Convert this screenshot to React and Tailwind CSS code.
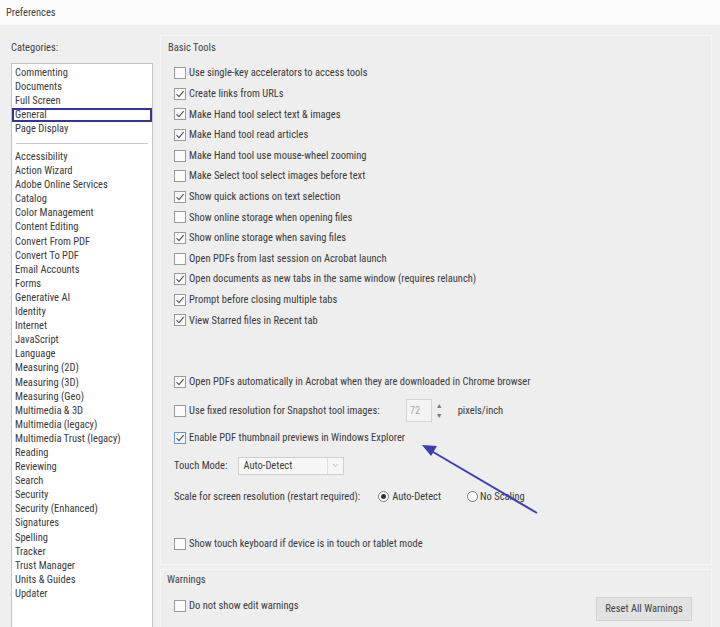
import { ChevronDown } from "lucide-react";

const topCategories = ["Commenting", "Documents", "Full Screen", "General", "Page Display"];

const categories = [
  "Accessibility",
  "Action Wizard",
  "Adobe Online Services",
  "Catalog",
  "Color Management",
  "Content Editing",
  "Convert From PDF",
  "Convert To PDF",
  "Email Accounts",
  "Forms",
  "Generative AI",
  "Identity",
  "Internet",
  "JavaScript",
  "Language",
  "Measuring (2D)",
  "Measuring (3D)",
  "Measuring (Geo)",
  "Multimedia & 3D",
  "Multimedia (legacy)",
  "Multimedia Trust (legacy)",
  "Reading",
  "Reviewing",
  "Search",
  "Security",
  "Security (Enhanced)",
  "Signatures",
  "Spelling",
  "Tracker",
  "Trust Manager",
  "Units & Guides",
  "Updater",
];

const basicTools = [
  { label: "Use single-key accelerators to access tools", checked: false },
  { label: "Create links from URLs", checked: true },
  { label: "Make Hand tool select text & images", checked: true },
  { label: "Make Hand tool read articles", checked: true },
  { label: "Make Hand tool use mouse-wheel zooming", checked: false },
  { label: "Make Select tool select images before text", checked: false },
  { label: "Show quick actions on text selection", checked: true },
  { label: "Show online storage when opening files", checked: false },
  { label: "Show online storage when saving files", checked: true },
  { label: "Open PDFs from last session on Acrobat launch", checked: false },
  { label: "Open documents as new tabs in the same window (requires relaunch)", checked: true },
  { label: "Prompt before closing multiple tabs", checked: true },
  { label: "View Starred files in Recent tab", checked: true },
];

function Checkbox({ checked, focused }) {
  return (
    <span
      className={`flex h-[12px] w-[12px] shrink-0 items-center justify-center border ${
        focused ? "border-[#6f93cf] bg-[#f3f7fd]" : "border-[#9a9a9a] bg-[#fbfbfb]"
      }`}
    >
      {checked && (
        <svg width="10" height="10" viewBox="0 0 10 10">
          <path d="M1.5 5.2 L4 7.6 L8.6 2.2" fill="none" stroke="#555" strokeWidth="1.1" />
        </svg>
      )}
    </span>
  );
}

function CheckRow({ label, checked, focused, className = "" }) {
  return (
    <div className={`flex items-center gap-[3px] ${className}`}>
      <Checkbox checked={checked} focused={focused} />
      <span>{label}</span>
    </div>
  );
}

function Radio({ checked }) {
  return (
    <span className="flex h-[11px] w-[11px] items-center justify-center rounded-full border border-[#7a7a7a] bg-white">
      {checked && <span className="h-[5px] w-[5px] rounded-full bg-[#333]" />}
    </span>
  );
}

export default function App() {
  return (
    <div className="relative h-[627px] w-[720px] overflow-hidden bg-[#efefef] font-['Liberation_Sans_Narrow','Roboto_Condensed',Roboto,sans-serif] text-[10.5px] text-[#3a3a3a]">
      <div className="flex h-[25px] items-center bg-[#fcfcfc] px-[6px] text-[10.5px] text-[#444]">
        Preferences
      </div>

      <div className="flex">
        <div className="w-[160px] shrink-0 pl-[11px] pt-[16px]">
          <p className="leading-[14px] text-[#444]">Categories:</p>
          <div className="mt-[8px] h-[600px] w-[142px] border border-[#c4c4c4] bg-white pt-[2px]">
            {topCategories.map((name) =>
              name === "General" ? (
                <div
                  key={name}
                  className="flex h-[14px] items-center border-2 border-[#34349a] pl-[1px] leading-none"
                >
                  {name}
                </div>
              ) : (
                <div key={name} className="h-[14px] pl-[3px] leading-[14px]">
                  {name}
                </div>
              )
            )}
            <div className="flex h-[14px] items-center px-[4px]">
              <div className="h-px w-full bg-[#c8c8c8]" />
            </div>
            {categories.map((name) => (
              <div key={name} className="h-[14.1px] pl-[3px] leading-[14.1px]">
                {name}
              </div>
            ))}
          </div>
        </div>

        <div className="flex w-[552px] flex-col gap-[4px] pt-[10px]">
          <div className="h-[530px] border border-[#f6f6f6] bg-[#eeeeee] pl-[13px]">
            <p className="-ml-[6px] pt-[5px] leading-[14px] text-[#444]">Basic Tools</p>
            <div className="mt-[8px]">
              {basicTools.map((item) => (
                <CheckRow key={item.label} label={item.label} checked={item.checked} className="h-[20.6px]" />
              ))}
            </div>

            <CheckRow
              label="Open PDFs automatically in Acrobat when they are downloaded in Chrome browser"
              checked
              className="mt-[42px] h-[18px]"
            />

            <div className="mt-[8px] flex h-[24px] items-center">
              <CheckRow label="Use fixed resolution for Snapshot tool images:" checked={false} />
              <div className="ml-[26px] flex h-[23px] w-[26px] items-center border border-[#d6d6d6] bg-[#f4f4f4] pl-[3px] text-[#aaa]">
                72
              </div>
              <div className="ml-[4px] flex flex-col items-center text-[7px] leading-[10px] text-[#777]">
                <span>▲</span>
                <span>▼</span>
              </div>
              <span className="ml-[15px]">pixels/inch</span>
            </div>

            <CheckRow
              label="Enable PDF thumbnail previews in Windows Explorer"
              checked
              focused
              className="mt-[6px] h-[18px]"
            />

            <div className="mt-[10px] flex h-[18px] items-center">
              <span>Touch Mode:</span>
              <div className="ml-[11px] flex h-[18px] w-[106px] items-center border border-[#cfcfcf] bg-[#f7f7f7] pl-[4px]">
                <span className="flex-1">Auto-Detect</span>
                <span className="flex h-full w-[16px] items-center justify-center border-l border-[#e0e0e0]">
                  <ChevronDown size={9} strokeWidth={1.5} className="text-[#888]" />
                </span>
              </div>
            </div>

            <div className="mt-[13px] flex h-[18px] items-center">
              <span>Scale for screen resolution (restart required):</span>
              <div className="ml-[18px] flex items-center gap-[3px]">
                <Radio checked />
                <span>Auto-Detect</span>
              </div>
              <div className="ml-[26px] flex items-center gap-[2px]">
                <Radio checked={false} />
                <span>No Scaling</span>
              </div>
            </div>

            <CheckRow
              label="Show touch keyboard if device is in touch or tablet mode"
              checked={false}
              className="mt-[29px] h-[18px]"
            />
          </div>

          <div className="h-[70px] border border-[#f6f6f6] bg-[#eeeeee] pl-[13px]">
            <p className="-ml-[7px] pt-[3px] leading-[14px] text-[#444]">Warnings</p>
            <div className="mt-[10px] flex items-start pr-[19px]">
              <CheckRow label="Do not show edit warnings" checked={false} className="h-[18px] flex-1" />
              <button
                type="button"
                className="h-[24px] w-[96px] border border-[#d2d2d2] bg-[#e2e2e2] text-[10.5px] text-[#444]"
              >
                Reset All Warnings
              </button>
            </div>
          </div>
        </div>
      </div>

      <svg className="pointer-events-none absolute left-0 top-0" width="720" height="627">
        <line x1="537" y1="513" x2="428" y2="449" stroke="#3b3fb3" strokeWidth="2" />
        <path d="M422 445 L437 446 L431 456 Z" fill="#3b3fb3" />
      </svg>
    </div>
  );
}
